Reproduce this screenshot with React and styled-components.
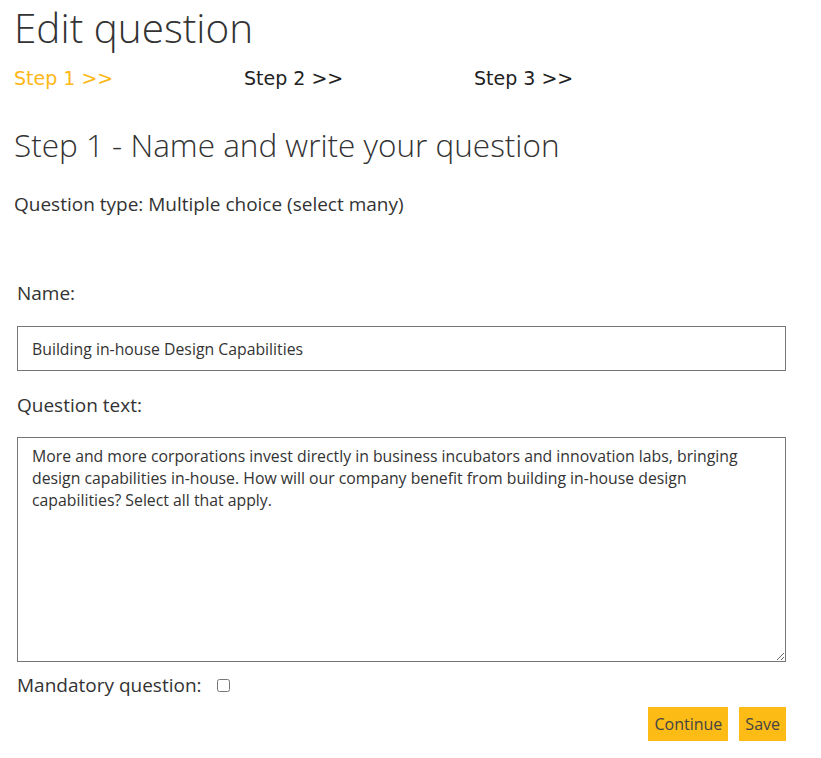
import React from "react";
import styled, { createGlobalStyle } from "styled-components";

const Global = createGlobalStyle`
  html, body { margin: 0; padding: 0; background: #fff; }
  body { font-family: "Open Sans", "Liberation Sans", sans-serif; color: #333; }
  * { box-sizing: border-box; }
`;

const Page = styled.div`
  padding: 0 35px 0 14px;
  width: 821px;
`;

const Title = styled.h1`
  margin: 0;
  padding-top: 3px;
  font-weight: 300;
  font-size: 40.5px;
  line-height: 50px;
  color: #333;
`;

const Steps = styled.div`
  display: flex;
  margin-top: 13px;
`;

const StepItem = styled.div`
  width: 230px;
  font-family: "DejaVu Sans", Verdana, sans-serif;
  font-size: 19px;
  line-height: 24px;
  color: ${(p) => (p.$active ? "#fdb714" : "#222")};
`;

const StepHeading = styled.h2`
  margin: 35px 0 0;
  font-weight: 300;
  font-size: 31.5px;
  line-height: 40px;
  color: #333;
`;

const TypeLine = styled.p`
  margin: 27px 0 0;
  font-size: 19px;
  line-height: 24px;
  color: #333;
`;

const Form = styled.div`
  margin-top: 65px;
  padding-left: 3px;
  display: flex;
  flex-direction: column;
`;

const Label = styled.label`
  display: block;
  font-size: 19px;
  line-height: 24px;
  color: #333;
`;

const TextInput = styled.input`
  display: block;
  width: 769px;
  height: 45px;
  margin: 21px 0 0;
  padding: 0 14px;
  border: 1px solid #767676;
  border-radius: 0;
  font-family: "Open Sans", sans-serif;
  font-size: 15.8px;
  color: #333;
  outline: none;
`;

const SecondLabel = styled(Label)`
  margin-top: 22px;
`;

const TextArea = styled.textarea`
  display: block;
  width: 769px;
  height: 225px;
  margin: 20px 0 0;
  padding: 7px 14px;
  border: 1px solid #767676;
  border-radius: 0;
  font-family: "Open Sans", sans-serif;
  font-size: 15.8px;
  line-height: 22px;
  color: #333;
  resize: both;
  outline: none;
`;

const CheckRow = styled.div`
  display: flex;
  align-items: center;
  gap: 15px;
  margin-top: 11px;
`;

const Check = styled.input`
  margin: 0;
  width: 13px;
  height: 13px;
`;

const Actions = styled.div`
  display: flex;
  justify-content: flex-end;
  gap: 11px;
  width: 769px;
  margin-top: 10px;
`;

const Button = styled.button`
  height: 34px;
  padding: 0 6px;
  border: none;
  border-radius: 0;
  background: #fdbb16;
  font-family: "Open Sans", sans-serif;
  font-size: 16px;
  color: #444;
  cursor: pointer;
`;

export default function App() {
  return (
    <>
      <Global />
      <Page>
        <Title>Edit question</Title>
        <Steps>
          <StepItem $active>Step 1 &gt;&gt;</StepItem>
          <StepItem>Step 2 &gt;&gt;</StepItem>
          <StepItem>Step 3 &gt;&gt;</StepItem>
        </Steps>
        <StepHeading>Step 1 - Name and write your question</StepHeading>
        <TypeLine>Question type: Multiple choice (select many)</TypeLine>
        <Form>
          <Label htmlFor="qname">Name:</Label>
          <TextInput id="qname" defaultValue="Building in-house Design Capabilities" />
          <SecondLabel htmlFor="qtext">Question text:</SecondLabel>
          <TextArea
            id="qtext"
            defaultValue="More and more corporations invest directly in business incubators and innovation labs, bringing design capabilities in-house. How will our company benefit from building in-house design capabilities? Select all that apply."
          />
          <CheckRow>
            <Label htmlFor="qmand">Mandatory question:</Label>
            <Check id="qmand" type="checkbox" />
          </CheckRow>
          <Actions>
            <Button>Continue</Button>
            <Button>Save</Button>
          </Actions>
        </Form>
      </Page>
    </>
  );
}
